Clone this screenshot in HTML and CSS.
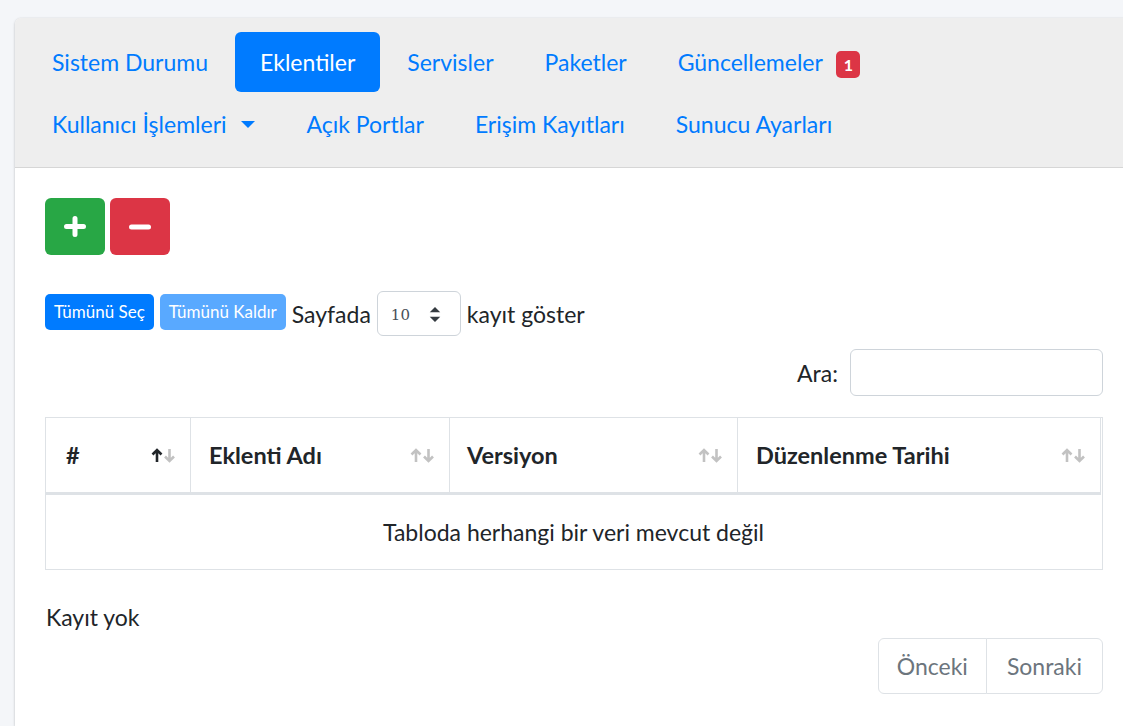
FILE: index.html
```html
<!DOCTYPE html>
<html lang="tr">
<head>
<meta charset="utf-8">
<title>Eklentiler</title>
<link rel="stylesheet" href="styles.css">
</head>
<body>
<div class="page">
  <div class="card">
    <div class="card-header">
      <nav class="nav">
        <div class="nav-row">
          <a class="nav-link">Sistem Durumu</a>
          <a class="nav-link active">Eklentiler</a>
          <a class="nav-link">Servisler</a>
          <a class="nav-link">Paketler</a>
          <a class="nav-link">Güncellemeler <span class="badge">1</span></a>
        </div>
        <div class="nav-row">
          <a class="nav-link">Kullanıcı İşlemleri <span class="caret"></span></a>
          <a class="nav-link">Açık Portlar</a>
          <a class="nav-link">Erişim Kayıtları</a>
          <a class="nav-link">Sunucu Ayarları</a>
        </div>
      </nav>
    </div>
    <div class="card-body">
      <div class="tools">
        <button class="btn-icon btn-success" aria-label="Ekle">
          <svg width="22" height="21" viewBox="0 0 22 21"><path d="M11 2.5V18.5M2.5 10.5H19.5" stroke="#fff" stroke-width="5" stroke-linecap="round" fill="none"/></svg>
        </button>
        <button class="btn-icon btn-danger" aria-label="Kaldır">
          <svg width="22" height="6" viewBox="0 0 22 6"><path d="M2.5 3H19.5" stroke="#fff" stroke-width="5" stroke-linecap="round" fill="none"/></svg>
        </button>
      </div>

      <div class="length-row">
        <span class="btn-xs">Tümünü Seç</span>
        <span class="btn-xs disabled">Tümünü Kaldır</span>
        <span>Sayfada</span>
        <span class="select-box"><span>10</span>
          <svg width="12" height="15" viewBox="0 0 8 10"><path d="M4 0L0.5 3.5h7zM4 10L0.5 6.5h7z" fill="#343a40"/></svg>
        </span>
        <span>kayıt göster</span>
      </div>

      <div class="filter-row">
        <label>Ara:</label>
        <span class="search-input"></span>
      </div>

      <div class="table-wrap">
        <table>
          <thead>
            <tr>
              <th class="c1"><div class="th-inner"><span>#</span><span class="sort asc"><svg width="25" height="15" viewBox="0 0 25 15"><path d="M6 14V2M1.5 6.5L6 2L10.5 6.5" class="up" fill="none" stroke-width="2.6"/><path d="M18.5 1V13M14 8.5L18.5 13L23 8.5" class="down" fill="none" stroke-width="2.6"/></svg></span></div></th>
              <th class="c2"><div class="th-inner"><span>Eklenti Adı</span><span class="sort"><svg width="25" height="15" viewBox="0 0 25 15"><path d="M6 14V2M1.5 6.5L6 2L10.5 6.5" class="up" fill="none" stroke-width="2.6"/><path d="M18.5 1V13M14 8.5L18.5 13L23 8.5" class="down" fill="none" stroke-width="2.6"/></svg></span></div></th>
              <th class="c3"><div class="th-inner"><span>Versiyon</span><span class="sort"><svg width="25" height="15" viewBox="0 0 25 15"><path d="M6 14V2M1.5 6.5L6 2L10.5 6.5" class="up" fill="none" stroke-width="2.6"/><path d="M18.5 1V13M14 8.5L18.5 13L23 8.5" class="down" fill="none" stroke-width="2.6"/></svg></span></div></th>
              <th class="c4"><div class="th-inner"><span>Düzenlenme Tarihi</span><span class="sort"><svg width="25" height="15" viewBox="0 0 25 15"><path d="M6 14V2M1.5 6.5L6 2L10.5 6.5" class="up" fill="none" stroke-width="2.6"/><path d="M18.5 1V13M14 8.5L18.5 13L23 8.5" class="down" fill="none" stroke-width="2.6"/></svg></span></div></th>
            </tr>
          </thead>
          <tbody>
            <tr><td colspan="4">Tabloda herhangi bir veri mevcut değil</td></tr>
          </tbody>
        </table>
      </div>

      <div class="info">Kayıt yok</div>
      <div class="pager">
        <span class="page-link first">Önceki</span>
        <span class="page-link last">Sonraki</span>
      </div>
    </div>
  </div>
</div>
</body>
</html>
```

FILE: styles.css
```css
* { box-sizing: border-box; }
html, body { margin: 0; }
body {
  background: #f4f6f9;
  font-family: Lato, "Noto Sans", sans-serif;
  color: #212529;
  width: 1123px;
  height: 726px;
  overflow: hidden;
}
.page { padding: 18px 0 0 15px; }
.card {
  width: 1118px;
  height: 708px;
  background: #fff;
  border-radius: 6px 6px 0 0;
  box-shadow: 0 0 1px rgba(0,0,0,.125), 0 1px 3px rgba(0,0,0,.2);
}
.card-header {
  background: #eeeeee;
  border-bottom: 1px solid #d6d6d6;
  border-radius: 6px 6px 0 0;
  padding: 14px 13px 13px;
}
.nav { display: flex; flex-direction: column; gap: 2px; }
.nav-row { display: flex; gap: 3px; }
.nav-link {
  display: flex;
  align-items: center;
  padding: 12px 24px;
  line-height: 36px;
  font-size: 23px;
  color: #007bff;
  text-decoration: none;
  border-radius: 6px;
  white-space: pre;
}
.nav-link.active { background: #007bff; color: #fff; padding: 12px 25px; }
.badge {
  display: inline-flex;
  align-items: center;
  justify-content: center;
  width: 24px;
  height: 27px;
  margin-left: 8px;
  margin-top: 5px;
  background: #dc3545;
  color: #fff;
  font-size: 16px;
  font-weight: 700;
  border-radius: 5px;
  line-height: 1;
}
.caret {
  display: inline-block;
  margin-left: 9px;
  width: 0;
  height: 0;
  border-top: 7px solid #007bff;
  border-left: 7.5px solid transparent;
  border-right: 7.5px solid transparent;
}
.card-body { padding: 30px; }
.tools { display: flex; gap: 5px; }
.btn-icon {
  width: 60px;
  height: 57px;
  border: none;
  border-radius: 6px;
  display: flex;
  align-items: center;
  justify-content: center;
  padding: 0;
}
.btn-success { background: #28a745; }
.btn-danger { background: #dc3545; }
.length-row {
  display: flex;
  align-items: center;
  gap: 6px;
  margin-top: 36px;
  font-size: 23px;
  height: 45px;
}
.btn-xs {
  height: 36px;
  padding: 0 9px;
  display: flex;
  align-items: center;
  font-size: 17px;
  color: #fff;
  background: #007bff;
  border-radius: 5px;
  margin-top: -4px;
}
.btn-xs.disabled { background: #59a9ff; }
.select-box {
  width: 84px;
  height: 45px;
  border: 1px solid #ced4da;
  border-radius: 6px;
  display: flex;
  align-items: center;
  justify-content: space-between;
  padding: 2px 19px 0 13px;
  font-family: "DejaVu Serif", serif;
  font-size: 15px;
  color: #495057;
}
.filter-row {
  display: flex;
  justify-content: flex-end;
  align-items: center;
  gap: 12px;
  margin-top: 13px;
  font-size: 23px;
}
.search-input {
  width: 253px;
  height: 47px;
  border: 1px solid #ced4da;
  border-radius: 6px;
}
.table-wrap {
  margin-top: 21px;
  border: 1px solid #dee2e6;
}
table {
  width: 1055px;
  border-collapse: separate;
  border-spacing: 0;
  table-layout: fixed;
}
th {
  height: 77px;
  padding: 0 14px 0 20px;
  border-right: 1px solid #dee2e6;
  border-bottom: 3px solid #dee2e6;
  font-size: 23.5px;
  font-weight: 700;
  text-align: left;
}
th.c1 { width: 145px; }
th.c2 { width: 259px; padding-left: 18px; }
th.c3 { width: 288px; padding-left: 17px; }
th.c4 { width: 363px; padding-left: 18px; }
.th-inner { display: flex; align-items: center; justify-content: space-between; }
.sort { display: flex; align-items: center; }
.sort .up, .sort .down { stroke: #c2c2c2; }
.sort.asc .up { stroke: #212529; }
td {
  height: 74px;
  text-align: center;
  font-size: 23px;
  padding: 0;
}
.info {
  margin-top: 29px;
  line-height: 36px;
  font-size: 23px;
  padding-left: 1px;
}
.pager {
  display: flex;
  justify-content: flex-end;
  margin-top: 3px;
}
.page-link {
  height: 56px;
  display: flex;
  align-items: center;
  padding: 0 20px;
  font-size: 23px;
  color: #6c757d;
  border: 1px solid #dee2e6;
  background: #fff;
}
.page-link.first { border-radius: 6px 0 0 6px; padding: 0 18px; }
.page-link.last { border-radius: 0 6px 6px 0; margin-left: -1px; }
```
